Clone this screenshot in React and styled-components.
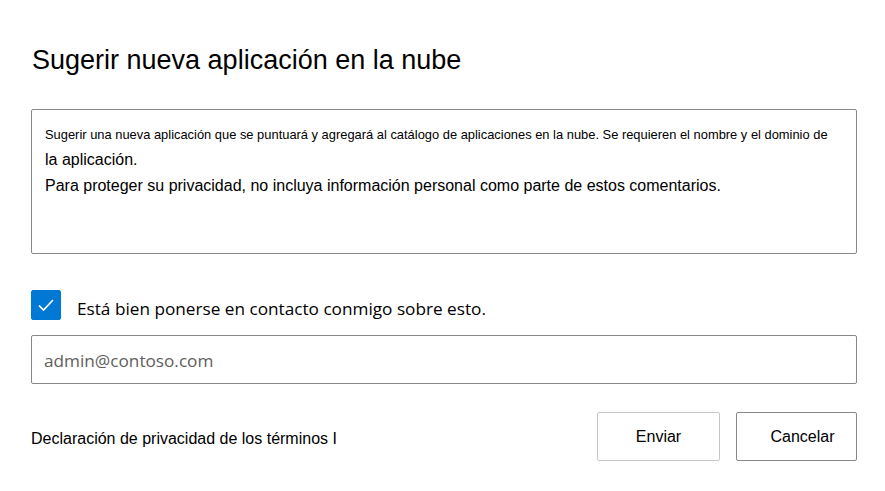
import React, { useState } from 'react';
import styled, { createGlobalStyle } from 'styled-components';

const GlobalStyle = createGlobalStyle`
  body {
    margin: 0;
    background: #fff;
    font-family: "Liberation Sans", Arial, sans-serif;
    color: #201f1e;
  }
`;

const Panel = styled.div`
  width: 885px;
  height: 491px;
  box-sizing: border-box;
  padding: 44px 28px 0 31px;
  display: flex;
  flex-direction: column;
`;

const Title = styled.h1`
  margin: 0 0 0 1px;
  font-size: 27px;
  font-weight: 400;
  line-height: 32px;
  color: #000;
`;

const DescriptionBox = styled.div`
  margin-top: 33px;
  height: 145px;
  box-sizing: border-box;
  border: 1px solid #8a8886;
  border-radius: 2px;
  padding: 13px 13px;
  color: #000;
`;

const SmallLine = styled.div`
  font-size: 12.9px;
  line-height: 24px;
  white-space: nowrap;
`;

const Line = styled.div`
  font-size: 16px;
  line-height: 26px;
  white-space: nowrap;
`;

const CheckRow = styled.label`
  margin-top: 36px;
  display: flex;
  align-items: center;
  gap: 16px;
  cursor: pointer;
`;

const Box = styled.span`
  width: 30px;
  height: 30px;
  border-radius: 2px;
  background: ${({ checked }) => (checked ? '#0078d4' : '#fff')};
  border: 1px solid ${({ checked }) => (checked ? '#0078d4' : '#323130')};
  box-sizing: border-box;
  display: flex;
  align-items: center;
  justify-content: center;
  flex-shrink: 0;
`;

const CheckText = styled.span`
  font-family: "Open Sans", "Noto Sans", sans-serif;
  font-size: 17.2px;
  color: #000;
  margin-top: 7px;
`;

const EmailInput = styled.input`
  margin-top: 15px;
  height: 49px;
  box-sizing: border-box;
  border: 1px solid #8a8886;
  border-radius: 2px;
  padding: 2px 12px 0;
  font-family: "Open Sans", "Noto Sans", sans-serif;
  font-size: 17.2px;
  color: #323130;
  outline: none;
  &::placeholder {
    color: #605e5c;
  }
`;

const Footer = styled.div`
  margin-top: 28px;
  display: flex;
  align-items: center;
  gap: 16px;
`;

const PrivacyText = styled.span`
  flex: 1;
  font-size: 16px;
  color: #000;
  margin-top: 5px;
`;

const Button = styled.button`
  width: ${({ wide }) => (wide ? 123 : 121)}px;
  height: 49px;
  padding: 0 ${({ wide }) => (wide ? 0 : '0 0 12px')};
  background: #fff;
  border: 1px solid ${({ primary }) => (primary ? '#c8c6c4' : '#8a8886')};
  border-radius: 2px;
  font-family: "Liberation Sans", Arial, sans-serif;
  font-size: 16px;
  color: #000;
  cursor: pointer;
`;

const CheckMark = () => (
  <svg width="18" height="14" viewBox="0 0 18 14">
    <path d="M2 7.5 L6.5 12 L16 2" fill="none" stroke="#fff" strokeWidth="1.7" />
  </svg>
);

export default function App() {
  const [checked, setChecked] = useState(true);
  const [email, setEmail] = useState('');

  return (
    <>
      <GlobalStyle />
      <Panel>
        <Title>Sugerir nueva aplicación en la nube</Title>
        <DescriptionBox>
          <SmallLine>
            Sugerir una nueva aplicación que se puntuará y agregará al catálogo de aplicaciones en la nube. Se requieren el nombre y el dominio de
          </SmallLine>
          <Line>la aplicación.</Line>
          <Line>Para proteger su privacidad, no incluya información personal como parte de estos comentarios.</Line>
        </DescriptionBox>
        <CheckRow onClick={() => setChecked(c => !c)}>
          <Box checked={checked}>{checked && <CheckMark />}</Box>
          <CheckText>Está bien ponerse en contacto conmigo sobre esto.</CheckText>
        </CheckRow>
        <EmailInput
          placeholder="admin@contoso.com"
          value={email}
          onChange={e => setEmail(e.target.value)}
        />
        <Footer>
          <PrivacyText>Declaración de privacidad de los términos I</PrivacyText>
          <Button primary wide>Enviar</Button>
          <Button>Cancelar</Button>
        </Footer>
      </Panel>
    </>
  );
}
